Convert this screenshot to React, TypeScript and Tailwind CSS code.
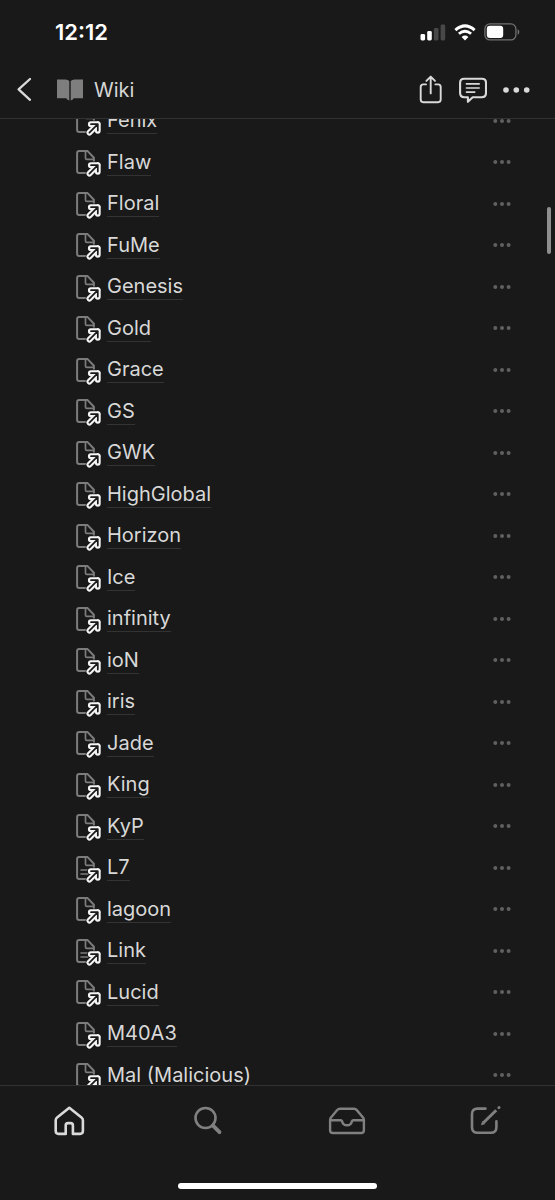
import React from "react";

type WikiPage = { title: string; filled?: boolean };

const pages: WikiPage[] = [
  { title: "Fenix" },
  { title: "Flaw" },
  { title: "Floral" },
  { title: "FuMe" },
  { title: "Genesis" },
  { title: "Gold" },
  { title: "Grace" },
  { title: "GS" },
  { title: "GWK" },
  { title: "HighGlobal" },
  { title: "Horizon" },
  { title: "Ice" },
  { title: "infinity" },
  { title: "ioN" },
  { title: "iris" },
  { title: "Jade" },
  { title: "King" },
  { title: "KyP" },
  { title: "L7", filled: true },
  { title: "lagoon" },
  { title: "Link", filled: true },
  { title: "Lucid" },
  { title: "M40A3" },
  { title: "Mal (Malicious)" },
];

function PageLinkIcon({ filled }: { filled?: boolean }) {
  return (
    <svg width="26" height="28" viewBox="0 0 26 28" fill="none" aria-hidden="true" className="shrink-0">
      <path
        d="M3.3 2.1H11.6L17.9 8.7V21.6Q17.9 23.9 15.6 23.9H3.3Q1.1 23.9 1.1 21.7V4.3Q1.1 2.1 3.3 2.1Z"
        stroke="#7c7c7c"
        strokeWidth="2"
        strokeLinejoin="round"
      />
      <path d="M9.5 2.4V9Q9.5 10.4 10.9 10.4H17.6" stroke="#7c7c7c" strokeWidth="1.7" />
      {filled && <path d="M5 15H14M5 19H12" stroke="#7c7c7c" strokeWidth="1.6" strokeLinecap="round" />}
      <g strokeLinecap="round" strokeLinejoin="round">
        <path d="M14.8 16.2H21.8V22.8M21.8 16.2L13.4 24.6" stroke="#191919" strokeWidth="7.2" />
        <path d="M14.8 16.2H21.8V22.8M21.8 16.2L13.4 24.6" stroke="#f4f4f4" strokeWidth="5.8" />
        <path d="M15 16.2H21.8V22.6M21.8 16.2L13.4 24.6" stroke="#191919" strokeWidth="1.7" />
      </g>
    </svg>
  );
}

function StatusBar() {
  return (
    <div className="flex h-[60px] shrink-0 items-center justify-between pt-1 pr-[35px] pl-[55px]">
      <time className="text-[22px] leading-7 font-semibold text-white">12:12</time>
      <div className="flex items-center gap-2">
        <svg width="26" height="17" viewBox="0 0 26 17" aria-label="Signal">
          <rect x="0.5" y="10" width="4.6" height="6.5" rx="1.4" fill="#fff" />
          <rect x="7.2" y="7" width="4.6" height="9.5" rx="1.4" fill="#fff" />
          <rect x="13.9" y="4" width="4.6" height="12.5" rx="1.4" fill="#484848" />
          <rect x="20.6" y="0.5" width="4.6" height="16" rx="1.4" fill="#484848" />
        </svg>
        <svg width="22" height="17" viewBox="0 0 22 17" fill="none" aria-label="Wi-Fi">
          <path d="M1.4 6.1Q11 -2.3 20.6 6.1" stroke="#fff" strokeWidth="3" />
          <path d="M4.9 9.8Q11 4.6 17.1 9.8" stroke="#fff" strokeWidth="2.8" />
          <path d="M11 16.4L7.6 12.9Q11 10 14.4 12.9Z" fill="#fff" />
        </svg>
        <svg width="36" height="18" viewBox="0 0 36 18" fill="none" aria-label="Battery">
          <rect x="0.9" y="0.9" width="31" height="16" rx="5" stroke="#717171" strokeWidth="1.3" />
          <rect x="2.8" y="2.8" width="16.4" height="12.2" rx="3" fill="#fff" />
          <path d="M33.6 6.2Q35.4 7 35.4 9T33.6 11.8Z" fill="#717171" />
        </svg>
      </div>
    </div>
  );
}

function Header() {
  return (
    <header className="flex h-[59px] shrink-0 items-center border-b border-[#323232] pt-[2px] pr-[25px] pl-4">
      <button type="button" aria-label="Back" className="flex">
        <svg width="17" height="26" viewBox="0 0 17 26" fill="none">
          <path d="M14 2L2.6 12.4L14 22.8" stroke="#dadada" strokeWidth="2.3" strokeLinecap="round" strokeLinejoin="round" />
        </svg>
      </button>
      <svg width="26" height="22" viewBox="0 0 26 22" aria-hidden="true" className="ml-6">
        <path
          d="M0 0.4H8.5Q11 0.4 12.3 2V21.4Q10.2 21.2 9.3 19.2H0ZM26 0.4H17.5Q15 0.4 13.7 2V21.4Q15.8 21.2 16.7 19.2H26Z"
          fill="#7e7e7e"
        />
      </svg>
      <h1 className="ml-[11px] text-xl text-[#d6d6d6]">Wiki</h1>
      <div className="ml-auto flex items-center">
        <button type="button" aria-label="Share" className="flex">
          <svg width="24" height="30" viewBox="0 0 24 30" fill="none" stroke="#dadada" strokeWidth="1.9" strokeLinecap="round" strokeLinejoin="round">
            <path d="M7 9.4H4.3Q1.7 9.4 1.7 12V24.6Q1.7 27.2 4.3 27.2H19.1Q21.7 27.2 21.7 24.6V12Q21.7 9.4 19.1 9.4H16.4" />
            <path d="M11.7 18.4V1.7M7.4 5.9L11.7 1.6L16 5.9" />
          </svg>
        </button>
        <button type="button" aria-label="Comments" className="ml-4 flex">
          <svg width="28" height="26" viewBox="0 0 28 26" fill="none" stroke="#dadada" strokeLinecap="round" strokeLinejoin="round">
            <path d="M5.1 1.7H22.9Q27 1.7 27 5.8V16.1Q27 20.2 22.9 20.2H13.7L8.9 24.8V20.2H5.1Q1.1 20.2 1.1 16.1V5.8Q1.1 1.7 5.1 1.7Z" strokeWidth="2.1" />
            <path d="M7.4 6.9H20.2M7.4 11H20.2M7.4 15.1H15.8" strokeWidth="1.6" />
          </svg>
        </button>
        <button type="button" aria-label="More" className="ml-4 flex">
          <svg width="27" height="8" viewBox="0 0 27 8" fill="#dadada">
            <circle cx="3" cy="4" r="2.8" />
            <circle cx="13.3" cy="4" r="2.8" />
            <circle cx="23.7" cy="4" r="2.8" />
          </svg>
        </button>
      </div>
    </header>
  );
}

function PageRow({ title, filled }: WikiPage) {
  return (
    <li className="flex h-[41px] items-center pr-11 pl-19 even:h-[42px]">
      <a href="#" className="flex items-center gap-[5px]">
        <span className="flex pt-[2px]">
          <PageLinkIcon filled={filled} />
        </span>
        <span className="border-b border-[#333333] text-xl leading-[26px] text-[#d8d8d8]">{title}</span>
      </a>
      <button type="button" aria-label={`More options for ${title}`} className="ml-auto flex">
        <svg width="18" height="6" viewBox="0 0 18 6" fill="#606060">
          <circle cx="2.3" cy="3" r="2" />
          <circle cx="9" cy="3" r="2" />
          <circle cx="15.6" cy="3" r="2" />
        </svg>
      </button>
    </li>
  );
}

function TabBar() {
  return (
    <footer className="shrink-0 border-t border-[#323232]">
      <nav className="grid grid-cols-4 pt-[18px] text-[#808080]">
        <a href="#" aria-label="Home" className="flex justify-center text-[#dadada]">
          <svg width="34" height="34" viewBox="0 0 34 34" fill="none" stroke="currentColor" strokeWidth="2.6" strokeLinejoin="round">
            <path d="M17.3 3.8L5.1 13.4Q3.7 14.5 3.7 16.2V27.1Q3.7 29.9 6.5 29.9H13.7V21.4Q13.7 19.1 16 19.1H18.6Q20.9 19.1 20.9 21.4V29.9H28.1Q30.9 29.9 30.9 27.1V16.2Q30.9 14.5 29.5 13.4Z" />
          </svg>
        </a>
        <a href="#" aria-label="Search" className="flex justify-center">
          <svg width="34" height="34" viewBox="0 0 34 34" fill="none" stroke="currentColor" strokeLinecap="round">
            <circle cx="14.5" cy="14" r="10" strokeWidth="2.6" />
            <path d="M22 21.6L28.5 28.2" strokeWidth="3.8" />
          </svg>
        </a>
        <a href="#" aria-label="Inbox" className="flex justify-center">
          <svg width="38" height="34" viewBox="0 0 38 34" fill="none" stroke="currentColor" strokeWidth="2.4" strokeLinejoin="round">
            <path d="M12 4.8H26Q27.7 4.8 28.8 6.1L35.2 13.8Q35.9 14.8 35.9 16V26.2Q35.9 29 33.1 29H4.9Q2.1 29 2.1 26.2V16Q2.1 14.8 2.8 13.8L9.2 6.1Q10.3 4.8 12 4.8Z" />
            <path d="M2.4 16.2H12.4Q14 16.2 14.2 17.8Q15 21.3 19 21.3T23.8 17.8Q24 16.2 25.6 16.2H35.6" />
          </svg>
        </a>
        <a href="#" aria-label="New page" className="flex justify-center">
          <svg width="34" height="34" viewBox="0 0 34 34" fill="none" stroke="currentColor" strokeWidth="2.6" strokeLinecap="round">
            <path d="M16.5 4.6H8.6Q3 4.6 3 10.2V23.2Q3 28.8 8.6 28.8H21.8Q27.4 28.8 27.4 23.2V17.4" />
            <path d="M27.2 6.2L14.4 18.8" strokeWidth="3" strokeLinecap="butt" />
            <path d="M13.4 17.6L12.3 20.9L15.6 19.9Z" fill="currentColor" strokeWidth="0.6" />
            <path d="M29.8 3.8L30.1 3.5" strokeWidth="2.8" />
          </svg>
        </a>
      </nav>
      <div className="flex justify-center pt-[45px] pb-[11px]">
        <div className="h-[6px] w-[36%] rounded-full bg-white" />
      </div>
    </footer>
  );
}

export default function App() {
  return (
    <div className="flex h-screen flex-col bg-[#191919] font-['Inter','Liberation_Sans',sans-serif]">
      <StatusBar />
      <Header />
      <main className="relative min-h-0 flex-1 overflow-hidden">
        <ul className="-mt-[19px]">
          {pages.map((page) => (
            <PageRow key={page.title} {...page} />
          ))}
        </ul>
        <div className="absolute top-[88px] right-1 h-[47px] w-1 rounded-full bg-[#8f8f8f]" />
      </main>
      <TabBar />
    </div>
  );
}
